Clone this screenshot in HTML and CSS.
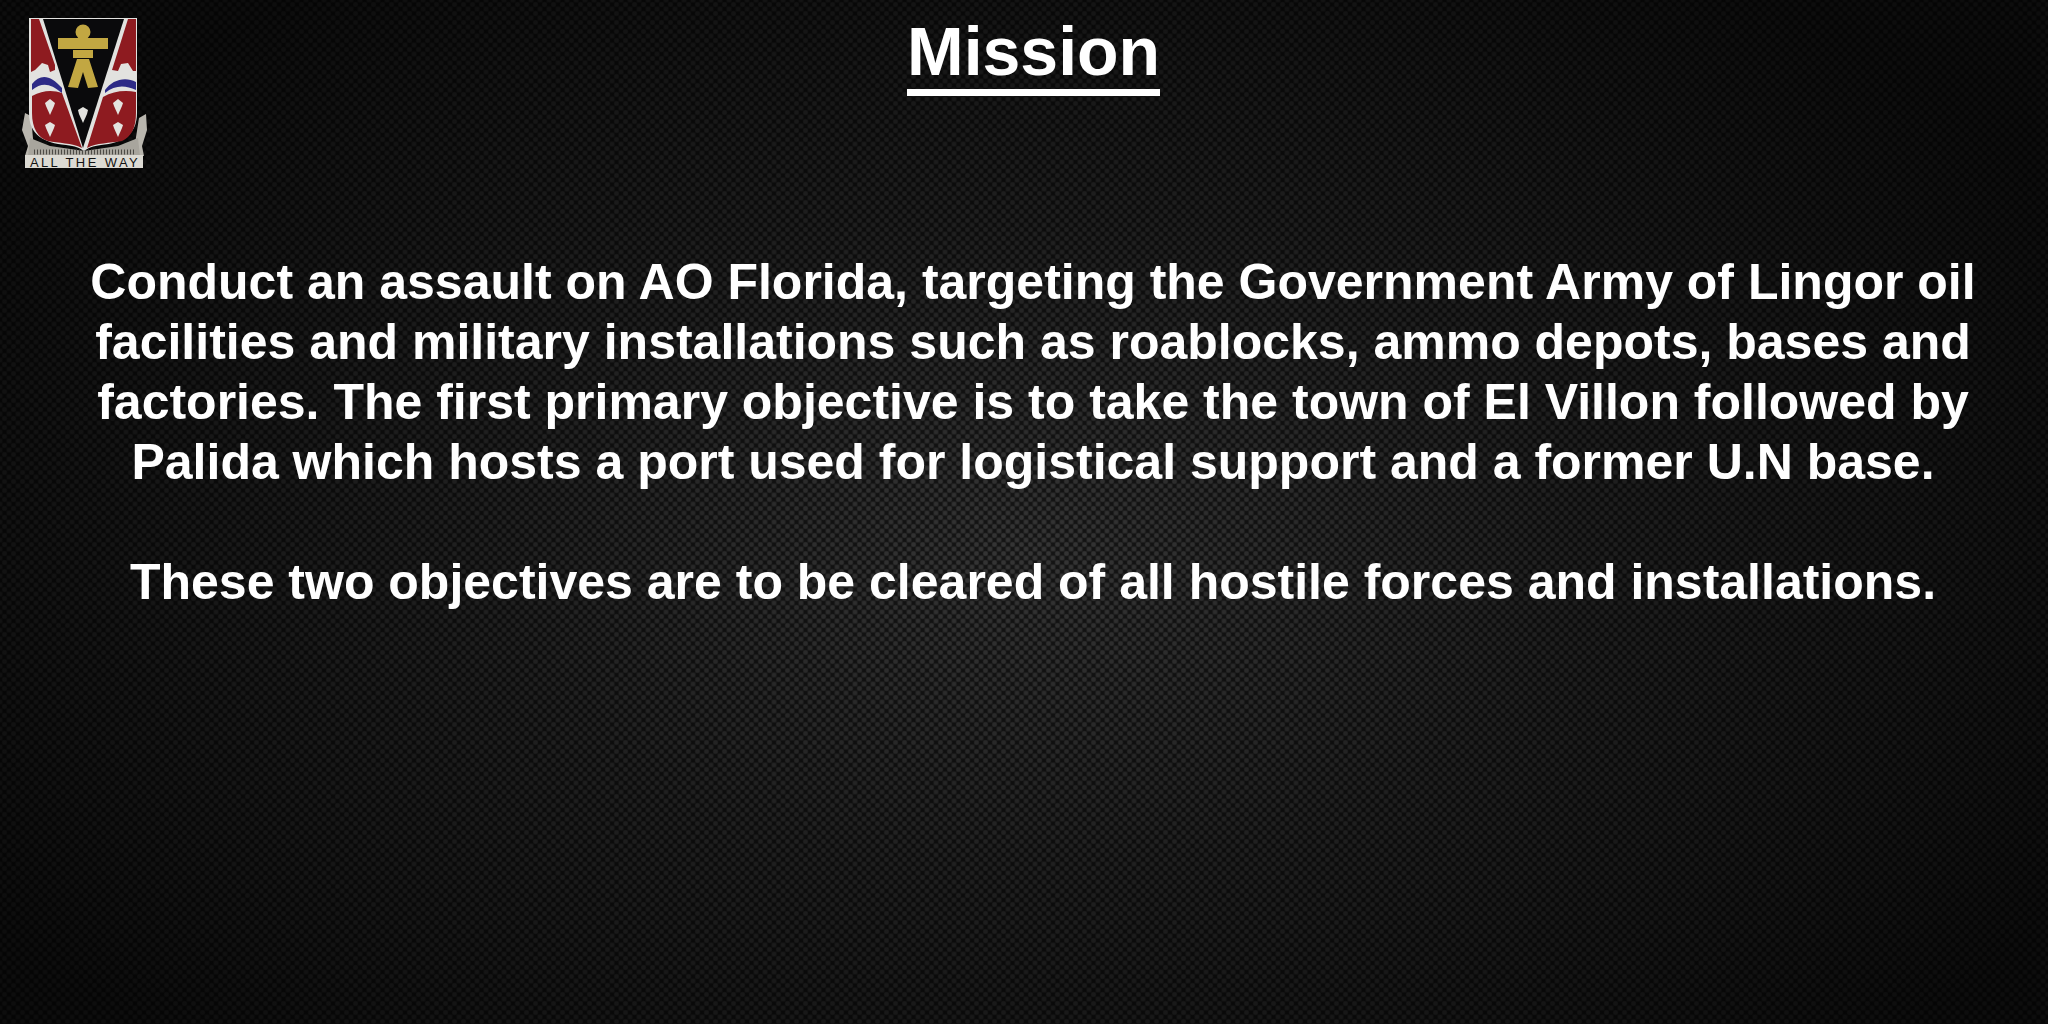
FILE: index.html
```html
<!DOCTYPE html>
<html lang="en">
<head>
    <meta charset="UTF-8">
    <meta name="viewport" content="width=device-width, initial-scale=1.0">
    <title>Mission</title>
    <link rel="stylesheet" href="styles.css">
</head>
<body>

<div class="slide">
    <div class="slide-header">
        <svg class="crest" viewBox="0 0 180 190" width="180" height="190">
            <!-- scroll behind the shield -->
            <path d="M25 113 L31 116 L34 150 L31 156 L25 156 L28 146 L22 130 Z" fill="#b9b6ae"/>
            <path d="M146 114 L139 118 L134 150 L138 156 L144 156 L142 146 L147 130 Z" fill="#b9b6ae"/>
            <path d="M30 138 L50 146 L84 151 L118 146 L138 138 L140 156 L28 156 Z" fill="#a8a59d"/>
            <line x1="34" y1="152" x2="134" y2="152" stroke="#4d4b46" stroke-width="5" stroke-dasharray="1 2"/>
            <rect x="25" y="155" width="118" height="13" fill="#dcdad3"/>
            <!-- shield -->
            <path d="M29 18 L137 18 L137 113 C137 135 122 143 101 145 C93 146 88 148 84 151 C80 148 75 146 66 145 C44 143 29 135 29 113 Z" fill="#e2e2df"/>
            <path d="M31 19 L39 19 L55 65 L55 70 L50 72 L48 65 L42 63 L35 70 L31 72 Z" fill="#8e1b20"/>
            <path d="M136 19 L128 19 L112 70 L118 71 L121 64 L128 63 L133 71 L136 71 Z" fill="#8e1b20"/>
            <path d="M43 19 L124 19 L83 148 Z" fill="#0a0a0c"/>
            <!-- figure -->
            <g fill="#c2a742">
                <circle cx="83" cy="32" r="7.5"/>
                <path d="M79 36 L87 36 L87 38 L108 38 L108 49 L58 49 L58 38 L79 38 Z"/>
                <path d="M73 50 L93 50 L93 58 L73 58 Z"/>
                <path d="M77 59 L89 59 L98 87 L88 88 L83 72 L78 88 L68 87 Z"/>
            </g>
            <!-- wavy bars -->
            <path d="M32 84 C40 74 50 74 62 88 L62 93 C50 83 42 82 32 90 Z" fill="#2d2a86"/>
            <path d="M105 90 C112 80 125 76 136 82 L136 90 C125 85 115 85 105 93 Z" fill="#2d2a86"/>
            <!-- lower red panels -->
            <path d="M32 96 C43 90 53 90 62 93 L82 148 C72 143 58 143 48 141 C38 138 32 128 32 113 Z" fill="#8e1b20"/>
            <path d="M136 92 C125 90 113 91 103 97 L87 148 C96 143 110 143 122 141 C131 137 136 128 136 113 Z" fill="#8e1b20"/>
            <!-- arrowheads -->
            <g fill="#e4e4e0">
                <path d="M50 99 L55 103 L54 106 L50 115 L46 106 L45 103 Z"/>
                <path d="M50 122 L55 125 L54 128 L50 137 L46 128 L45 125 Z"/>
                <path d="M83 107 L88 110 L87 114 L83 123 L79 114 L78 110 Z"/>
                <path d="M118 99 L123 103 L122 106 L118 115 L114 106 L113 103 Z"/>
                <path d="M118 122 L123 125 L122 128 L118 137 L114 128 L113 125 Z"/>
            </g>
            <text class="crest-motto" x="85" y="167" text-anchor="middle">ALL THE WAY</text>
        </svg>
        <h1 class="slide-title">Mission</h1>
    </div>

    <div class="slide-body">
        <p>Conduct an assault on AO Florida, targeting the Government Army of Lingor oil<br>
        facilities and military installations such as roablocks, ammo depots, bases and<br>
        factories. The first primary objective is to take the town of El Villon followed by<br>
        Palida which hosts a port used for logistical support and a former U.N base.</p>
        <p>These two objectives are to be cleared of all hostile forces and installations.</p>
    </div>
</div>

</body>
</html>
```

FILE: styles.css
```css
body {
    font-family: "Liberation Sans", Arial, sans-serif;
    margin: 0;
    color: white;
    background-color: #0b0b0b;
}

/* vignette on top, weave underneath */
.slide {
    width: 2048px;
    height: 1024px;
    overflow: hidden;
    background-color: #272727;
    background-image:
        radial-gradient(ellipse 1200px 700px at 50% 54%, rgba(0, 0, 0, 0) 0%, rgba(0, 0, 0, 0.4) 45%, rgba(0, 0, 0, 0.76) 100%),
        radial-gradient(#353535 25%, transparent 50%),
        radial-gradient(#353535 25%, transparent 50%),
        radial-gradient(#141414 30%, transparent 60%),
        radial-gradient(#141414 30%, transparent 60%);
    background-size: 100% 100%, 9px 9px, 9px 9px, 9px 9px, 9px 9px;
    background-position: 0 0, 0 0, 4.5px 4.5px, 4.5px 0, 0 4.5px;
}

.slide-header {
    display: grid;
    grid-template-columns: 907px auto 1fr;
    height: 252px;
}

.crest {
    display: block;
}

.crest-motto {
    font-size: 13px;
    letter-spacing: 2.4px;
    fill: #111;
}

.slide-title {
    margin: 0;
    align-self: start;
    padding-top: 14px;
    font-size: 68px;
    line-height: 75px;
    font-weight: bold;
    border-bottom: 7px solid white;
}

.slide-body {
    padding-left: 18px;
    text-align: center;
    font-size: 50px;
    font-weight: bold;
    line-height: 60px;
}

.slide-body p {
    margin: 0 0 60px 0;
}
```
